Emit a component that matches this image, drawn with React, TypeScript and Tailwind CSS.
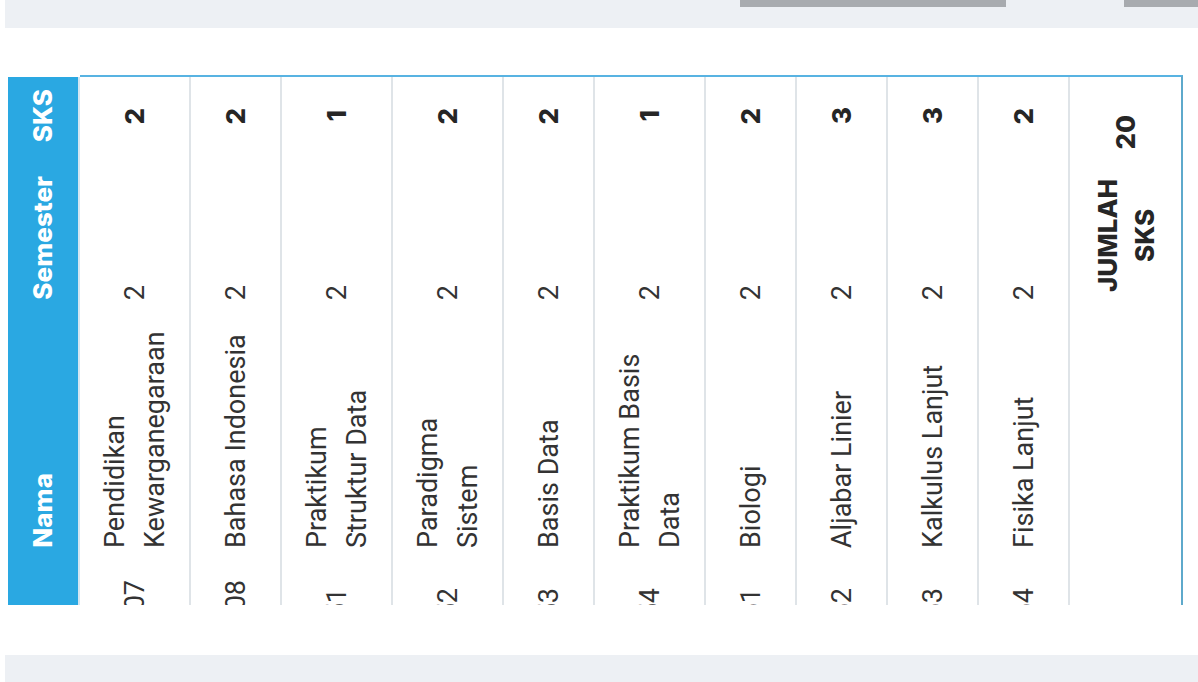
type Course = { code: string; name: string; sem: number; sks: number };

const courses: Course[] = [
  { code: 'MKU1107', name: 'Pendidikan Kewarganegaraan', sem: 2, sks: 2 },
  { code: 'MKU1108', name: 'Bahasa Indonesia', sem: 2, sks: 2 },
  { code: 'TIF1251', name: 'Praktikum Struktur Data', sem: 2, sks: 1 },
  { code: 'TIF1252', name: 'Paradigma Sistem', sem: 2, sks: 2 },
  { code: 'TIF1253', name: 'Basis Data', sem: 2, sks: 2 },
  { code: 'TIF1254', name: 'Praktikum Basis Data', sem: 2, sks: 1 },
  { code: 'MIP1161', name: 'Biologi', sem: 2, sks: 2 },
  { code: 'MIP1162', name: 'Aljabar Linier', sem: 2, sks: 3 },
  { code: 'MIP1163', name: 'Kalkulus Lanjut', sem: 2, sks: 3 },
  { code: 'MIP1164', name: 'Fisika Lanjut', sem: 2, sks: 2 },
];

const body = "font-['Roboto','Liberation_Sans',sans-serif]";
const bold = "font-['Inter','Liberation_Sans',sans-serif] font-extrabold";
// text that reads bottom to top
const side = '[writing-mode:vertical-rl] rotate-180';

function CourseColumn({ c }: { c: Course }) {
  const codePad = c.code.startsWith('MKU') ? 'pt-[16px]' : 'pt-[24px]';
  return (
    <div className="flex min-w-[91px] flex-col border-r-2 border-[#dfe4e8]">
      <div className="flex h-[78px] items-center justify-center">
        <div className={`${side} ${bold} text-[26px] leading-[30px] text-[#262626]`}>{c.sks}</div>
      </div>
      <div className="flex h-[161px] flex-col items-center justify-end pb-[16px]">
        <div className={`${side} ${body} text-[27px] leading-[40px] text-[#333]`}>{c.sem}</div>
      </div>
      <div className="flex h-[248px] flex-col items-center justify-end px-[14.5px] pb-[16px]">
        <div className={`${side} ${body} h-[216px] text-[27px] leading-[40px] text-[#333]`}>{c.name}</div>
      </div>
      <div className={`flex min-h-0 flex-1 flex-col items-center overflow-hidden ${codePad}`}>
        <div className={`${side} ${body} whitespace-nowrap text-[27px] leading-[40px] text-[#333]`}>{c.code}</div>
      </div>
    </div>
  );
}

export default function App() {
  const total = courses.reduce((s, c) => s + c.sks, 0);

  return (
    <div className="flex h-[682px] w-[1198px] flex-col overflow-hidden bg-white">
      <div className="ml-[5px] flex h-[28px] items-start bg-[#edf0f4]">
        <div className="ml-[735px] h-[7px] w-[266px] bg-[#a8abaf]" />
        <div className="ml-[118px] h-[7px] w-[74px] bg-[#a8abaf]" />
      </div>

      <div className="mt-[47px] flex h-[530px] overflow-hidden pl-[8px]">
        {/* header column */}
        <div className="mt-[2px] flex w-[70px] flex-col bg-[#2aa8e2]">
          <div className="flex h-[78px] items-center justify-center">
            <div className={`${side} ${bold} text-[26px] leading-[30px] text-white`}>SKS</div>
          </div>
          <div className="flex h-[161px] flex-col items-center justify-end pb-[16px]">
            <div className={`${side} ${bold} text-[26px] leading-[30px] text-white`}>Semester</div>
          </div>
          <div className="flex h-[248px] flex-col items-center justify-end pb-[16px]">
            <div className={`${side} ${bold} text-[26px] leading-[30px] text-white`}>Nama</div>
          </div>
        </div>
        <div className="mt-[2px] w-[2px] bg-[#d4e6f1]" />

        <div className="flex border-r-2 border-t-2 border-r-[#5ea9cb] border-t-[#58b3e2]">
          {courses.map((c) => (
            <CourseColumn key={c.code} c={c} />
          ))}
          <div className="flex w-[111px] flex-col">
            <div className="flex h-[78px] items-center justify-center pt-[32px]">
              <div className={`${side} ${bold} text-[26px] leading-[30px] text-[#262626]`}>{total}</div>
            </div>
            <div className="flex h-[161px] items-center justify-center">
              <div className={`${side} ${bold} text-center text-[26px] leading-[37px] text-[#262626]`}>
                JUMLAH SKS
              </div>
            </div>
          </div>
        </div>
      </div>

      <div className="mt-[50px] ml-[5px] h-[27px] bg-[#edf0f4]" />
    </div>
  );
}
